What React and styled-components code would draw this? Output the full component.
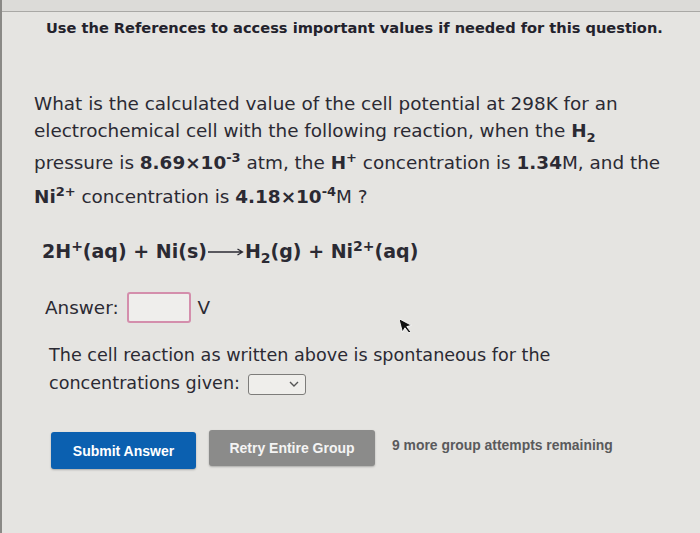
import styled, { createGlobalStyle } from "styled-components";

const Global = createGlobalStyle`
  html, body {
    margin: 0;
    padding: 0;
    background: #e5e4e1;
  }
  body {
    font-family: "DejaVu Sans", Verdana, sans-serif;
    color: #2b2a33;
  }
`

const Frame = styled.div`
  position: relative;
  min-height: 533px;
  border-left: 2px solid #8a8986;
  box-sizing: border-box;
  overflow: hidden;
`

const TopStrip = styled.div`
  height: 11px;
  background: #dcdbd8;
  border-bottom: 1px solid #a9a8a5;
`

const Notice = styled.p`
  margin: 7px 0 0 44px;
  font-size: 14.6px;
  font-weight: bold;
  line-height: 18px;
  color: #23222c;
`

const Question = styled.div`
  margin: 53px 0 0 32px;
  font-size: 18.4px;

  b { font-weight: bold; }
  sup, sub { font-size: 13px; line-height: 0; }
`

const Line = styled.div`
  height: ${p => p.$h}px;
  line-height: ${p => p.$h}px;
  white-space: nowrap;
`

const Equation = styled.div`
  display: flex;
  align-items: center;
  margin: 25px 0 0 40px;
  font-size: 19px;
  font-weight: bold;
  line-height: 28px;

  sup, sub { font-size: 14px; line-height: 0; }
`

const ArrowIcon = styled.svg`
  margin: 2px 1px 0 1px;
`

const AnswerRow = styled.div`
  display: flex;
  align-items: center;
  margin: 27px 0 0 43px;
  font-size: 18.4px;
`

const AnswerBox = styled.div`
  width: 60px;
  height: 27px;
  margin: 0 7px 0 8px;
  border: 2px solid #d48eac;
  border-radius: 3px;
  background: #efeeec;
`

const Spontaneous = styled.p`
  margin: 18px 0 0 47px;
  width: 560px;
  font-size: 17.6px;
  line-height: 28px;
`

const Select = styled.span`
  display: inline-flex;
  align-items: center;
  justify-content: flex-end;
  vertical-align: middle;
  box-sizing: border-box;
  width: 58px;
  height: 21px;
  margin-left: 8px;
  padding-right: 6px;
  border: 1px solid #7d7c7a;
  border-radius: 3px;
  background: #efeeeb;
`

const Buttons = styled.div`
  display: flex;
  align-items: flex-start;
  gap: 13px;
  margin: 33px 0 0 49px;
  font-family: "Liberation Sans", Arial, sans-serif;
`

const Button = styled.div`
  display: flex;
  align-items: center;
  justify-content: center;
  width: ${p => p.$w}px;
  height: ${p => p.$h}px;
  margin-top: ${p => p.$top || 0}px;
  border-radius: 3px;
  background: ${p => p.$bg};
  color: ${p => p.$fg};
  font-size: 14px;
  font-weight: bold;
  box-shadow: 0 1px 2px rgba(0, 0, 0, 0.25);
`

const Remaining = styled.span`
  margin: 7px 0 0 4px;
  font-size: 13.9px;
  font-weight: bold;
  color: #5a5a5c;
`

const Cursor = styled.svg`
  position: absolute;
  left: 398px;
  top: 316px;
`

const App = () => {
  return (
    <>
      <Global />
      <Frame>
        <TopStrip />
        <Notice>Use the References to access important values if needed for this question.</Notice>

        <Question>
          <Line $h={27}>What is the calculated value of the cell potential at 298K for an</Line>
          <Line $h={27}>electrochemical cell with the following reaction, when the <b>H<sub>2</sub></b></Line>
          <Line $h={37}>
            pressure is <b>8.69×10<sup>-3</sup></b> atm, the <b>H<sup>+</sup></b> concentration is <b>1.34</b>M, and the
          </Line>
          <Line $h={31}>
            <b>Ni<sup>2+</sup></b> concentration is <b>4.18×10<sup>-4</sup></b>M ?
          </Line>
        </Question>

        <Equation>
          <span>2H<sup>+</sup>(aq) + Ni(s)</span>
          <ArrowIcon width="36" height="10" viewBox="0 0 36 10">
            <path d="M0 5 H34 M29.5 2 L34.5 5 L29.5 8" fill="none" stroke="#2b2a33" strokeWidth="1.3" />
          </ArrowIcon>
          <span>H<sub>2</sub>(g) + Ni<sup>2+</sup>(aq)</span>
        </Equation>

        <AnswerRow>
          Answer:
          <AnswerBox />
          V
        </AnswerRow>

        <Spontaneous>
          The cell reaction as written above is spontaneous for the<br />concentrations given:
          <Select>
            <svg width="10" height="6" viewBox="0 0 10 6">
              <path d="M1 1 L5 5 L9 1" fill="none" stroke="#555" strokeWidth="1.4" />
            </svg>
          </Select>
        </Spontaneous>

        <Buttons>
          <Button $w={145} $h={37} $top={2} $bg="#0b60b0" $fg="#ffffff">Submit Answer</Button>
          <Button $w={166} $h={36} $bg="#8b8b8a" $fg="#f4f4f4">Retry Entire Group</Button>
          <Remaining>9 more group attempts remaining</Remaining>
        </Buttons>

        <Cursor width="14" height="20" viewBox="0 0 14 20">
          <path d="M1 1 L1 15 L4.5 11.5 L7 17.5 L9 16.6 L6.6 10.8 L11.5 10.8 Z" fill="#111" stroke="#fff" strokeWidth="0.8" transform="rotate(-15 6 10)" />
        </Cursor>
      </Frame>
    </>
  );
}

export default App;
